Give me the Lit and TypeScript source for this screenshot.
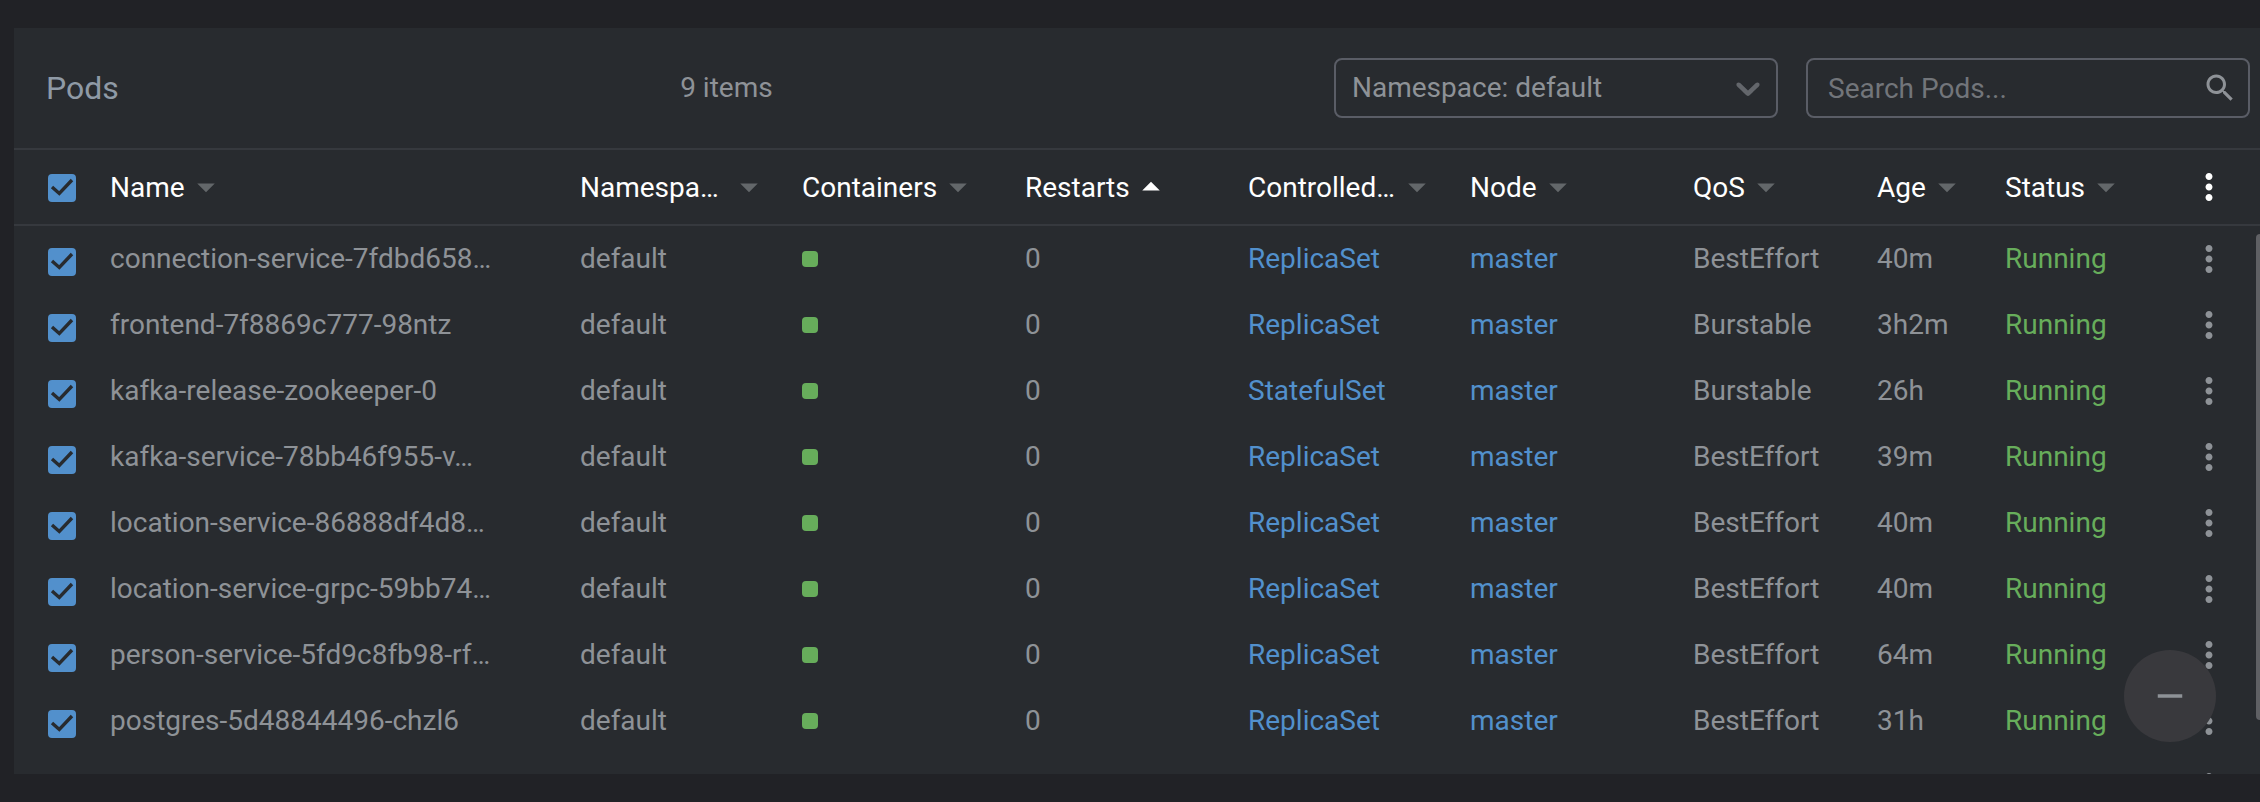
import { LitElement, html, css } from "lit";
import { customElement, state } from "lit/decorators.js";
import { classMap } from "lit/directives/class-map.js";

interface Pod {
  name: string;
  owner: string;
  qos: string;
  age: string;
}

const PODS: Pod[] = [
  { name: "connection-service-7fdbd658…", owner: "ReplicaSet", qos: "BestEffort", age: "40m" },
  { name: "frontend-7f8869c777-98ntz", owner: "ReplicaSet", qos: "Burstable", age: "3h2m" },
  { name: "kafka-release-zookeeper-0", owner: "StatefulSet", qos: "Burstable", age: "26h" },
  { name: "kafka-service-78bb46f955-v…", owner: "ReplicaSet", qos: "BestEffort", age: "39m" },
  { name: "location-service-86888df4d8…", owner: "ReplicaSet", qos: "BestEffort", age: "40m" },
  { name: "location-service-grpc-59bb74…", owner: "ReplicaSet", qos: "BestEffort", age: "40m" },
  { name: "person-service-5fd9c8fb98-rf…", owner: "ReplicaSet", qos: "BestEffort", age: "64m" },
  { name: "postgres-5d48844496-chzl6", owner: "ReplicaSet", qos: "BestEffort", age: "31h" },
];

const COLUMNS = ["Name", "Namespace", "Containers", "Restarts", "Controlled By", "Node", "QoS", "Age", "Status"];

const moreIcon = html`<svg class="icon" viewBox="0 0 24 24" aria-hidden="true">
  <path d="M12 8c1.1 0 2-.9 2-2s-.9-2-2-2-2 .9-2 2 .9 2 2 2zm0 2c-1.1 0-2 .9-2 2s.9 2 2 2 2-.9 2-2-.9-2-2-2zm0 6c-1.1 0-2 .9-2 2s.9 2 2 2 2-.9 2-2-.9-2-2-2z"/>
</svg>`;

@customElement("app-root")
export class AppRoot extends LitElement {
  @state() private sortBy = "Restarts";

  static styles = css`
    :host {
      --text: #8e9297;
      --line: #36393e;
      --field-line: #5a5d66;
      --panel: #282b2f;
      --blue: #5290cc;
      --green: #67ad5b;
      display: flex;
      flex-direction: column;
      box-sizing: border-box;
      height: 100vh;
      padding: 28px 0 28px 14px;
      background: #212226;
      color: var(--text);
      font: 28px/40px Roboto, sans-serif;
    }
    * { box-sizing: border-box; }
    button, input, select { font: inherit; color: inherit; }
    button { border: 0; padding: 0; background: none; cursor: pointer; }
    .icon { display: block; flex: none; width: 42px; height: 42px; fill: currentColor; }

    .panel {
      position: relative;
      flex: 1;
      min-height: 0;
      display: flex;
      flex-direction: column;
      overflow: hidden;
      background: var(--panel);
    }
    .header {
      flex: none;
      display: flex;
      align-items: center;
      height: 120px;
      padding: 0 10px 0 32px;
    }
    .title { margin: 0; font-size: 32px; font-weight: 400; color: #8f9aa6; }
    .count { flex: 1; text-align: center; }
    .field { position: relative; display: flex; align-items: center; width: 444px; height: 60px; }
    .field + .field { margin-left: 28px; }
    .control {
      width: 100%;
      height: 60px;
      border: 2px solid var(--field-line);
      border-radius: 8px;
      background: transparent;
      outline: 0;
      appearance: none;
    }
    .select { padding: 0 56px 0 16px; }
    .search { padding: 0 56px 0 20px; }
    .search::placeholder { color: #72757a; opacity: 1; }
    .field .chevron { position: absolute; right: 10px; width: 40px; height: 40px; color: #63666b; pointer-events: none; }
    .field .lens { position: absolute; right: 12px; width: 36px; height: 36px; pointer-events: none; }

    .table { display: flex; flex-direction: column; flex: 1; min-height: 0; }
    .body { display: block; flex: 1; min-height: 0; overflow: hidden; }
    .head { display: block; flex: none; }
    .row {
      display: grid;
      grid-template-columns: 80px 470fr 222fr 223fr 223fr 222fr 223fr 184fr 128fr 169fr 102px;
      align-items: center;
      height: 66px;
    }
    .head .row {
      height: 78px;
      border-top: 2px solid var(--line);
      border-bottom: 2px solid var(--line);
      color: #fff;
    }
    .cell { padding: 0 16px; min-width: 0; font-weight: 400; text-align: left; white-space: nowrap; }
    .cell.tick { padding: 0 0 0 34px; }
    .head .tick { padding-top: 2px; }
    .body .tick { padding-top: 6px; }
    .cell.menu { display: flex; justify-content: center; padding: 0; }
    .sort { display: flex; align-items: center; max-width: 100%; }
    .label { overflow: hidden; text-overflow: ellipsis; }
    .sort .label { padding-top: 2px; }
    .sort .icon { color: #63676a; }
    .sort.active .icon { color: #fff; }
    .check {
      display: block;
      width: 28px;
      height: 28px;
      margin: 0;
      border-radius: 4px;
      appearance: none;
      border: 2px solid var(--blue);
    }
    .check:checked {
      background: var(--blue)
        url("data:image/svg+xml,%3Csvg xmlns='http://www.w3.org/2000/svg' viewBox='0 0 24 24'%3E%3Cpath d='M2 11L9.300 17.500L22 4' fill='none' stroke='%23282b2f' stroke-width='3.400'/%3E%3C/svg%3E")
        center / 24px 24px no-repeat;
    }
    .brick { display: block; width: 16px; height: 16px; border-radius: 4px; background: var(--green); }
    .link { color: var(--blue); text-decoration: none; }
    .running { color: var(--green); }
    .thumb {
      position: absolute;
      right: 0;
      top: 206px;
      bottom: 54px;
      width: 4px;
      border-radius: 4px 0 0 4px;
      background: #5f6064;
    }
    .fab {
      position: absolute;
      right: 44px;
      bottom: 32px;
      display: flex;
      align-items: center;
      justify-content: center;
      width: 92px;
      height: 92px;
      border-radius: 50%;
      background: #39393d;
      color: var(--text);
    }
  `;

  private renderHeading(column: string) {
    const active = column === this.sortBy;
    return html`<th class="cell" scope="col">
      <button class=${classMap({ sort: true, active })} @click=${() => (this.sortBy = column)}>
        <span class="label">${column}</span>
        <svg class="icon" viewBox="0 0 24 24" aria-hidden="true"><path d=${active ? "M7 14l5-5 5 5z" : "M7 10l5 5 5-5z"} /></svg>
      </button>
    </th>`;
  }

  private renderPod(pod: Pod) {
    return html`<tr class="row">
      <td class="cell tick"><input class="check" type="checkbox" checked aria-label=${pod.name} /></td>
      <td class="cell label">${pod.name}</td>
      <td class="cell">default</td>
      <td class="cell"><span class="brick"></span></td>
      <td class="cell">0</td>
      <td class="cell"><a class="link" href="#owner">${pod.owner}</a></td>
      <td class="cell"><a class="link" href="#node">master</a></td>
      <td class="cell">${pod.qos}</td>
      <td class="cell">${pod.age}</td>
      <td class="cell running">Running</td>
      <td class="cell menu"><button aria-label="Pod actions">${moreIcon}</button></td>
    </tr>`;
  }

  render() {
    return html`<main class="panel">
      <header class="header">
        <h1 class="title">Pods</h1>
        <span class="count">9 items</span>
        <div class="field">
          <select class="control select" aria-label="Namespace">
            <option>Namespace: default</option>
          </select>
          <svg class="icon chevron" viewBox="0 0 20 20" aria-hidden="true">
            <path d="M4.516 7.548c0.436-0.446 1.043-0.481 1.576 0l3.908 3.747 3.908-3.747c0.533-0.481 1.141-0.446 1.574 0 0.436 0.445 0.408 1.197 0 1.615-0.406 0.418-4.695 4.502-4.695 4.502-0.217 0.223-0.502 0.335-0.787 0.335s-0.57-0.112-0.789-0.335c0 0-4.287-4.084-4.695-4.502s-0.436-1.17 0-1.615z"/>
          </svg>
        </div>
        <div class="field">
          <input class="control search" type="text" placeholder="Search Pods..." aria-label="Search Pods" />
          <svg class="icon lens" viewBox="0 0 24 24" aria-hidden="true">
            <path d="M15.5 14h-.79l-.28-.27C15.41 12.59 16 11.11 16 9.5 16 5.91 13.09 3 9.5 3S3 5.91 3 9.5 5.91 16 9.5 16c1.61 0 3.09-.59 4.23-1.57l.27.28v.79l5 4.99L20.49 19l-4.99-5zm-6 0C7.01 14 5 11.99 5 9.5S7.01 5 9.5 5 14 7.01 14 9.5 11.99 14 9.5 14z"/>
          </svg>
        </div>
      </header>
      <table class="table">
        <thead class="head">
          <tr class="row">
            <th class="cell tick"><input class="check" type="checkbox" checked aria-label="Select all pods" /></th>
            ${COLUMNS.map((column) => this.renderHeading(column))}
            <th class="cell menu"><button aria-label="Columns">${moreIcon}</button></th>
          </tr>
        </thead>
        <tbody class="body">
          ${PODS.map((pod) => this.renderPod(pod))}
          <tr class="row">
            <td class="cell" style="grid-column: span 10"></td>
            <td class="cell menu"><button aria-label="Pod actions">${moreIcon}</button></td>
          </tr>
        </tbody>
      </table>
      <div class="thumb"></div>
      <button class="fab" aria-label="Remove selected pods">
        <svg class="icon" viewBox="0 0 24 24" aria-hidden="true"><path d="M19 13H5v-2h14v2z"/></svg>
      </button>
    </main>`;
  }
}
